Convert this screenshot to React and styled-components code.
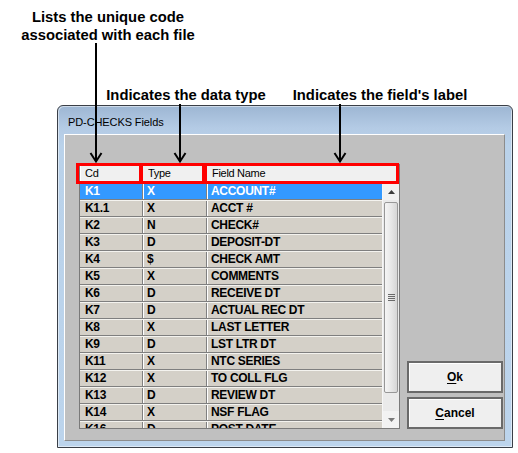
import React from "react";
import styled, { createGlobalStyle } from "styled-components";

const rows = [
  ["K1", "X", "ACCOUNT#"],
  ["K1.1", "X", "ACCT #"],
  ["K2", "N", "CHECK#"],
  ["K3", "D", "DEPOSIT-DT"],
  ["K4", "$", "CHECK AMT"],
  ["K5", "X", "COMMENTS"],
  ["K6", "D", "RECEIVE DT"],
  ["K7", "D", "ACTUAL REC DT"],
  ["K8", "X", "LAST LETTER"],
  ["K9", "D", "LST LTR DT"],
  ["K11", "X", "NTC SERIES"],
  ["K12", "X", "TO COLL FLG"],
  ["K13", "D", "REVIEW DT"],
  ["K14", "X", "NSF FLAG"],
  ["K16", "D", "POST DATE"],
];

const GlobalStyle = createGlobalStyle`
  html, body {
    margin: 0;
    padding: 0;
    background: #ffffff;
  }
  body {
    font-family: "Liberation Sans", Arial, sans-serif;
  }
`;

const Page = styled.div`
  position: relative;
  width: 518px;
  height: 453px;
  box-sizing: border-box;
  padding: 105px 0 0 57px;
  overflow: hidden;
`;

const Window = styled.div`
  width: 456px;
  height: 343px;
  box-sizing: border-box;
  border: 1px solid #3a3f47;
  border-radius: 6px 6px 0 0;
  background: linear-gradient(to bottom, #9db6d3 0px, #b4cbe5 22px, #bad2ea 40px, #bcd4ec 100%);
  box-shadow: inset 1px 1px 0 rgba(255, 255, 255, 0.5), inset -1px -1px 0 rgba(255, 255, 255, 0.5);
  display: flex;
  flex-direction: column;
`;

const TitleBar = styled.div`
  height: 28px;
  box-sizing: border-box;
  padding: 10px 0 0 10px;
  font-size: 11px;
  line-height: 13px;
  letter-spacing: -0.1px;
  color: #000;
`;

const Client = styled.div`
  margin-left: 6px;
  width: 441px;
  height: 307px;
  box-sizing: border-box;
  background: #c0c0c0;
  border: 1px solid;
  border-color: #ffffff #8c8c8c #8c8c8c #ffffff;
  padding: 29px 0 11px 14px;
  display: flex;
  align-items: flex-end;
`;

const List = styled.div`
  width: 321px;
  height: 265px;
  box-sizing: border-box;
  border: 1px solid #7a7a7a;
  background: #d4d0c8;
  display: flex;
  flex-direction: column;
  overflow: hidden;
`;

const Header = styled.div`
  display: grid;
  grid-template-columns: 61px 64px 1fr;
  height: 18px;
  flex: none;
`;

const HeadCell = styled.div`
  box-sizing: border-box;
  background: #f0f0f0;
  border-bottom: 1px solid #a0a0a0;
  border-right: 1px solid #a0a0a0;
  border-left: 1px solid #ffffff;
  padding-left: ${(p) => p.$pad || 6}px;
  font-size: 11px;
  line-height: 17px;
  letter-spacing: -0.3px;
  color: #000;
`;

const Body = styled.div`
  flex: 1;
  display: flex;
  min-height: 0;
`;

const Rows = styled.div`
  flex: 1;
  overflow: hidden;
`;

const Row = styled.div`
  display: grid;
  grid-template-columns: 63px 64px 1fr;
  height: 17px;
  box-sizing: border-box;
  border-bottom: 1px solid #7f7f7f;
  border-top: 1px solid ${(p) => (p.$selected ? "#3399ff" : "#f4f3ef")};
  background: ${(p) => (p.$selected ? "#3399ff" : "#d4d0c8")};
  color: ${(p) => (p.$selected ? "#ffffff" : "#000000")};
`;

const Cell = styled.div`
  box-sizing: border-box;
  padding-left: ${(p) => p.$pad || 3}px;
  border-right: ${(p) => (p.$last ? "none" : "1px solid #808080")};
  border-left: ${(p) => (p.$first ? "none" : "1px solid #ffffff")};
  font-size: 12px;
  font-weight: bold;
  line-height: 15px;
  letter-spacing: -0.3px;
  white-space: nowrap;
  overflow: hidden;
`;

const ScrollBar = styled.div`
  width: 17px;
  flex: none;
  background: #eaeaea;
  border-left: 1px solid #f6f6f6;
  display: flex;
  flex-direction: column;
  box-sizing: border-box;
`;

const ArrowButton = styled.div`
  height: 17px;
  flex: none;
  display: flex;
  align-items: center;
  justify-content: center;
  background: #f2f2f2;
`;

const Track = styled.div`
  flex: 1;
  padding: 2px 1px 18px 1px;
  display: flex;
  flex-direction: column;
`;

const Thumb = styled.div`
  height: 191px;
  box-sizing: border-box;
  border: 1px solid #979797;
  border-radius: 2px;
  background: linear-gradient(to right, #f5f5f5, #e6e6e6 55%, #d6d6d6);
  display: flex;
  align-items: center;
  justify-content: center;
`;

const Buttons = styled.div`
  margin-left: 7px;
  display: flex;
  flex-direction: column;
  gap: 4px;
`;

const Button = styled.button`
  width: 96px;
  height: 32px;
  box-sizing: border-box;
  border: 2px solid #6a6a6a;
  background: #efefef;
  box-shadow: inset 1px 1px 0 #ffffff;
  font-family: "Liberation Sans", Arial, sans-serif;
  font-size: 12px;
  font-weight: bold;
  color: #000;
  padding: 0;
  cursor: pointer;

  u {
    text-decoration-thickness: 1px;
    text-underline-offset: 2px;
  }
`;

const Callout = styled.div`
  position: absolute;
  left: ${(p) => p.$left}px;
  top: ${(p) => p.$top}px;
  width: ${(p) => p.$width}px;
  text-align: center;
  font-size: 14.8px;
  font-weight: bold;
  line-height: 18px;
  color: #000;
  white-space: nowrap;
`;

const Overlay = styled.svg`
  position: absolute;
  left: 0;
  top: 0;
  pointer-events: none;
`;

function Arrow({ x, y1, y2 }) {
  return (
    <g stroke="#000" strokeWidth="2" fill="none">
      <line x1={x} y1={y1} x2={x} y2={y2} />
      <polyline points={`${x - 5.5},${y2 - 9} ${x},${y2 - 0.5} ${x + 5.5},${y2 - 9}`} />
    </g>
  );
}

export default function App() {
  return (
    <>
      <GlobalStyle />
      <Page>
        <Window>
          <TitleBar>PD-CHECKS Fields</TitleBar>
          <Client>
            <List>
              <Header>
                <HeadCell $pad={4}>Cd</HeadCell>
                <HeadCell>Type</HeadCell>
                <HeadCell>Field Name</HeadCell>
              </Header>
              <Body>
                <Rows>
                  {rows.map((r, i) => (
                    <Row key={r[0]} $selected={i === 0}>
                      <Cell $first $pad={5}>{r[0]}</Cell>
                      <Cell>{r[1]}</Cell>
                      <Cell $last>{r[2]}</Cell>
                    </Row>
                  ))}
                </Rows>
                <ScrollBar>
                  <ArrowButton>
                    <svg width="7" height="4" viewBox="0 0 7 4">
                      <path d="M3.5 0 L7 4 L0 4 Z" fill="#3c3c3c" />
                    </svg>
                  </ArrowButton>
                  <Track>
                    <Thumb>
                      <svg width="7" height="8" viewBox="0 0 7 8">
                        <g fill="#6a6a6a">
                          <rect x="0" y="0" width="7" height="1" />
                          <rect x="0" y="2" width="7" height="1" />
                          <rect x="0" y="4" width="7" height="1" />
                          <rect x="0" y="6" width="7" height="1" />
                        </g>
                      </svg>
                    </Thumb>
                  </Track>
                  <ArrowButton>
                    <svg width="7" height="4" viewBox="0 0 7 4">
                      <path d="M0 0 L7 0 L3.5 4 Z" fill="#7a7a7a" />
                    </svg>
                  </ArrowButton>
                </ScrollBar>
              </Body>
            </List>
            <Buttons>
              <Button>
                <u>O</u>k
              </Button>
              <Button>
                <u>C</u>ancel
              </Button>
            </Buttons>
          </Client>
        </Window>

        <Callout $left={0} $top={8} $width={216}>
          Lists the unique code
          <br />
          associated with each file
        </Callout>
        <Callout $left={96} $top={86} $width={180}>
          Indicates the data type
        </Callout>
        <Callout $left={280} $top={86} $width={200}>
          Indicates the field's label
        </Callout>

        <Overlay width="518" height="453" viewBox="0 0 518 453">
          <Arrow x={96} y1={43} y2={162} />
          <Arrow x={180} y1={104} y2={162} />
          <Arrow x={340} y1={104} y2={162} />
          <g stroke="#ff0000" strokeWidth="3" fill="none">
            <rect x="77.5" y="164.5" width="63" height="18" />
            <rect x="141.5" y="164.5" width="62" height="18" />
            <rect x="205.5" y="164.5" width="192" height="18" />
          </g>
        </Overlay>
      </Page>
    </>
  );
}
